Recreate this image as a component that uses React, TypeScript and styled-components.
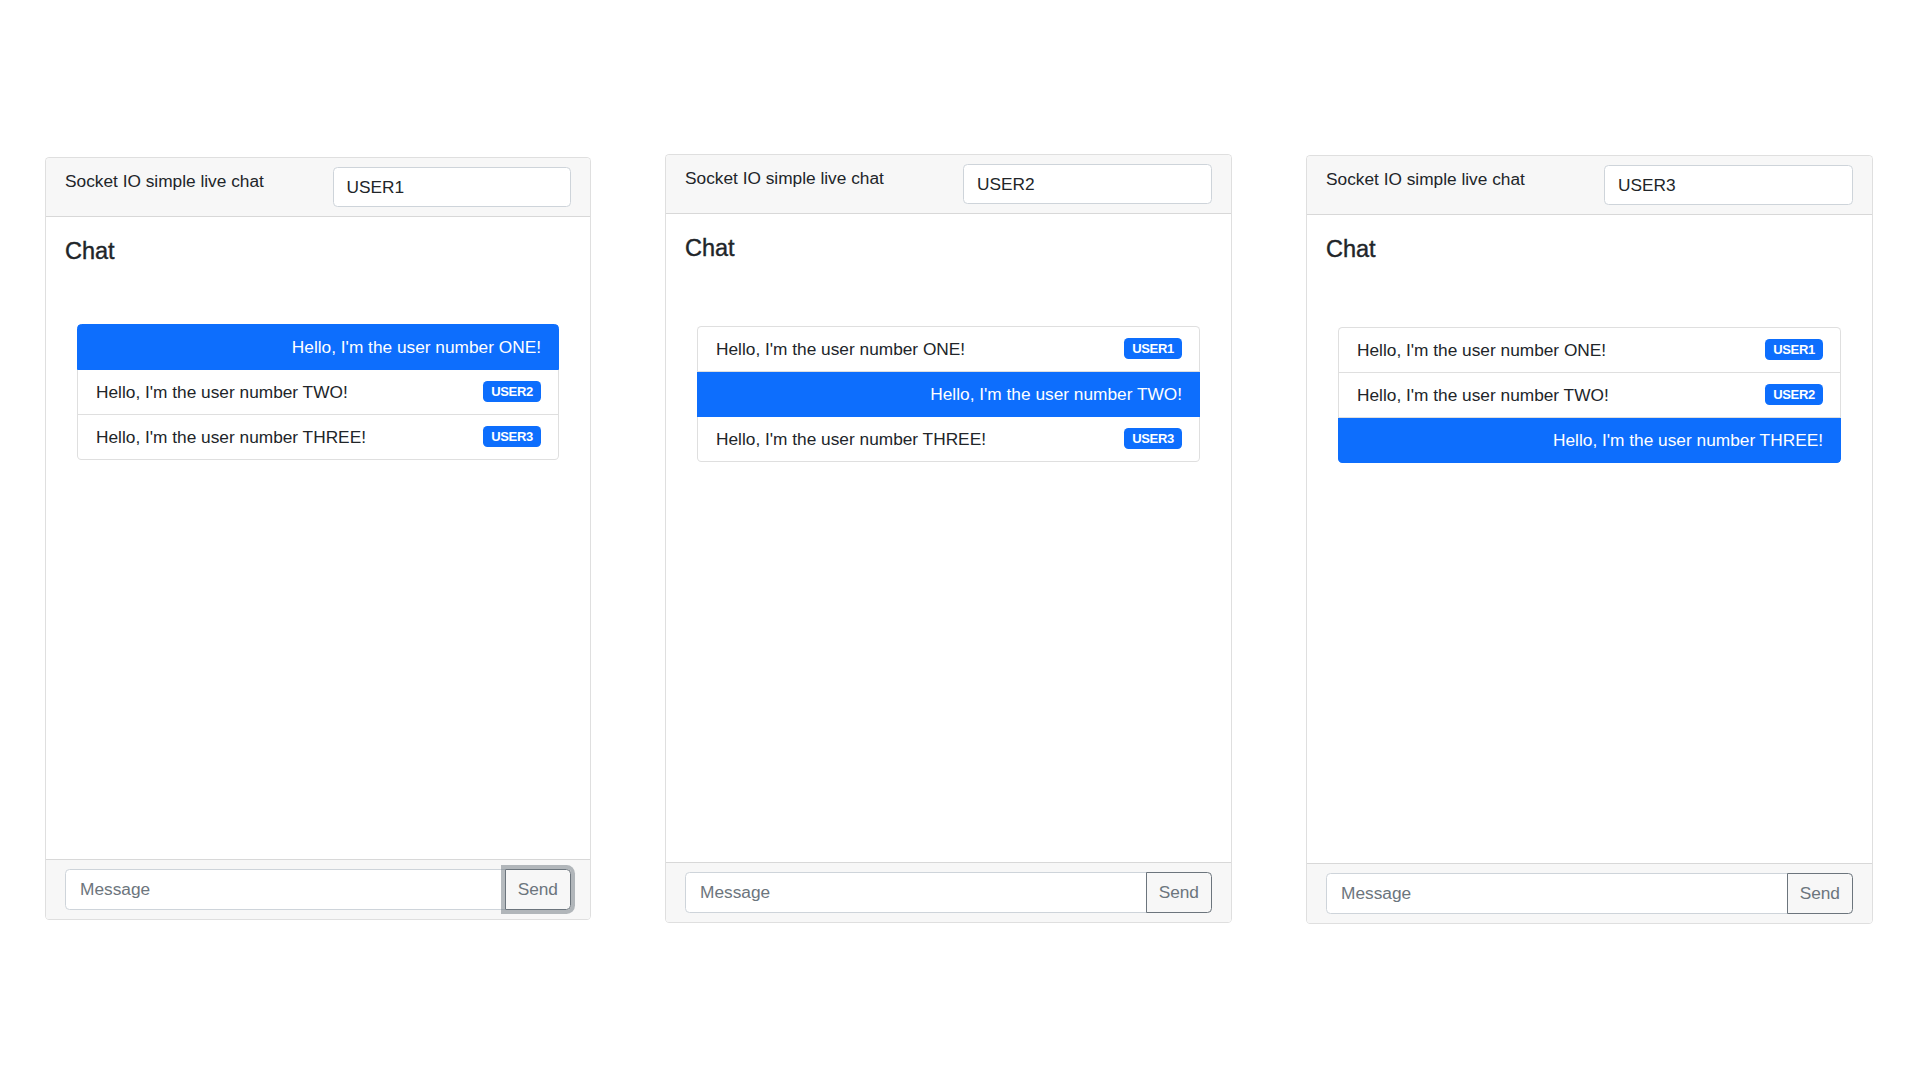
import React from 'react';
import styled, { createGlobalStyle } from 'styled-components';

const GlobalStyle = createGlobalStyle`
  html, body { margin: 0; padding: 0; background: #ffffff; }
  body {
    font-family: "Liberation Sans", Arial, sans-serif;
    color: #212529;
    -webkit-font-smoothing: antialiased;
  }
  *, *::before, *::after { box-sizing: border-box; }
`;

const Page = styled.main`
  width: 1920px;
  height: 1080px;
  display: flex;
  align-items: flex-start;
  gap: 74px;
  padding-left: 45px;
  background: #ffffff;
`;

const Card = styled.section<{ $top: number; $width: number; $height: number }>`
  margin-top: ${(p) => p.$top}px;
  width: ${(p) => p.$width}px;
  height: ${(p) => p.$height}px;
  display: flex;
  flex-direction: column;
  background: #ffffff;
  border: 1px solid rgba(0, 0, 0, 0.125);
  border-radius: 4.5px;
  overflow: hidden;
`;

const Header = styled.header`
  display: grid;
  grid-template-columns: 1fr 1fr;
  column-gap: 29px;
  padding: 9px 19px;
  background: #f7f7f7;
  border-bottom: 1px solid rgba(0, 0, 0, 0.125);
`;

const HeaderTitle = styled.div`
  font-size: 17.3px;
  line-height: 28.8px;
  color: #212529;
`;

const NameInput = styled.input`
  width: 100%;
  height: 40px;
  padding: 0 13px;
  font-family: inherit;
  font-size: 17.3px;
  color: #212529;
  background: #ffffff;
  border: 1px solid #ced4da;
  border-radius: 4.5px;
  outline: none;
`;

const Body = styled.div`
  flex: 1;
  padding: 20px 19px 19px;
`;

const Title = styled.h5`
  margin: 0;
  font-size: 23.5px;
  line-height: 28.8px;
  font-weight: 400;
  -webkit-text-stroke: 0.4px #212529;
  color: #212529;
`;

const List = styled.ul<{ $offset: number }>`
  list-style: none;
  margin: ${(p) => p.$offset}px 12px 0;
  padding: 0;
  display: flex;
  flex-direction: column;
`;

const Item = styled.li<{ $active: boolean }>`
  display: flex;
  align-items: center;
  justify-content: ${(p) => (p.$active ? 'flex-end' : 'space-between')};
  padding: 8px 17px 8px 18px;
  font-size: 17.3px;
  line-height: 28px;
  color: ${(p) => (p.$active ? '#ffffff' : '#212529')};
  background: ${(p) => (p.$active ? '#0d6efd' : '#ffffff')};
  border: 1px solid ${(p) => (p.$active ? '#0d6efd' : 'rgba(0, 0, 0, 0.125)')};
  & + & { border-top-width: 0; }
  &:first-child { border-radius: 4.5px 4.5px 0 0; }
  &:last-child { border-radius: 0 0 4.5px 4.5px; }
`;

const Badge = styled.span`
  display: inline-flex;
  align-items: center;
  height: 21px;
  padding: 0 8px;
  font-size: 13px;
  font-weight: 700;
  letter-spacing: -0.3px;
  line-height: 1;
  color: #ffffff;
  background: #0d6efd;
  border-radius: 4.5px;
`;

const Footer = styled.footer`
  padding: 9px 19px;
  background: #f7f7f7;
  border-top: 1px solid rgba(0, 0, 0, 0.125);
`;

const InputGroup = styled.div`
  display: flex;
  height: 41px;
`;

const MessageInput = styled.input`
  flex: 1;
  min-width: 0;
  height: 100%;
  padding: 0 14px;
  font-family: inherit;
  font-size: 17.3px;
  color: #212529;
  background: #ffffff;
  border: 1px solid #ced4da;
  border-radius: 4.5px 0 0 4.5px;
  outline: none;
  &::placeholder { color: #6c757d; opacity: 1; }
`;

const SendButton = styled.button<{ $focused: boolean }>`
  position: relative;
  margin-left: -1px;
  height: 100%;
  padding: 0 12px;
  font-family: inherit;
  font-size: 17.3px;
  color: #6c757d;
  background: transparent;
  border: 1px solid #6c757d;
  border-radius: 0 4.5px 4.5px 0;
  box-shadow: ${(p) => (p.$focused ? '0 0 0 4px rgba(108, 117, 125, 0.5)' : 'none')};
  cursor: pointer;
`;

type Msg = { text: string; user: string };

const messages: Msg[] = [
  { text: "Hello, I'm the user number ONE!", user: 'USER1' },
  { text: "Hello, I'm the user number TWO!", user: 'USER2' },
  { text: "Hello, I'm the user number THREE!", user: 'USER3' },
];

type ChatProps = {
  me: string;
  top: number;
  width: number;
  height: number;
  listOffset: number;
  focused?: boolean;
};

function ChatWindow({ me, top, width, height, listOffset, focused = false }: ChatProps) {
  return (
    <Card $top={top} $width={width} $height={height}>
      <Header>
        <HeaderTitle>Socket IO simple live chat</HeaderTitle>
        <NameInput defaultValue={me} />
      </Header>
      <Body>
        <Title>Chat</Title>
        <List $offset={listOffset}>
          {messages.map((m) => {
            const mine = m.user === me;
            return (
              <Item key={m.user} $active={mine}>
                <span>{m.text}</span>
                {!mine && <Badge>{m.user}</Badge>}
              </Item>
            );
          })}
        </List>
      </Body>
      <Footer>
        <InputGroup>
          <MessageInput placeholder="Message" />
          <SendButton $focused={focused}>Send</SendButton>
        </InputGroup>
      </Footer>
    </Card>
  );
}

export default function App() {
  return (
    <>
      <GlobalStyle />
      <Page>
        <ChatWindow me="USER1" top={157} width={546} height={763} listOffset={58} focused />
        <ChatWindow me="USER2" top={154} width={567} height={769} listOffset={63} />
        <ChatWindow me="USER3" top={155} width={567} height={769} listOffset={63} />
      </Page>
    </>
  );
}
